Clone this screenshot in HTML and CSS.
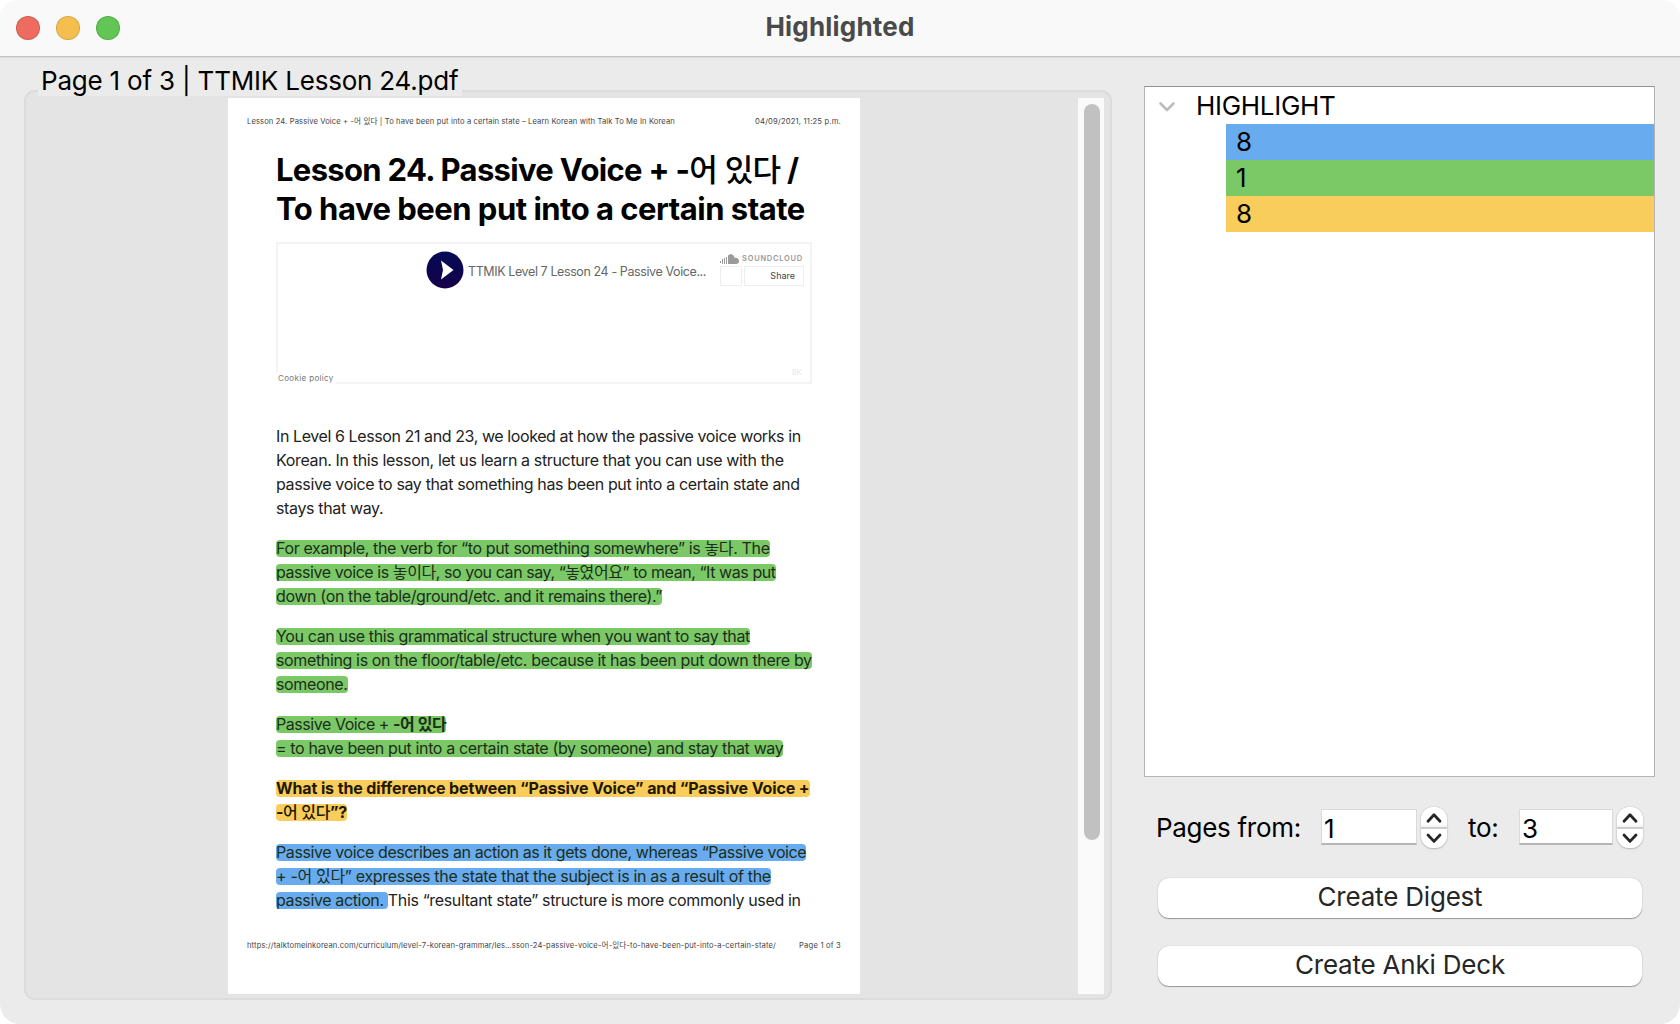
FILE: index.html
```html
<!DOCTYPE html>
<html lang="en">
<head>
<meta charset="utf-8">
<title>Highlighted</title>
<link rel="stylesheet" href="styles.css">
</head>
<body>
<div class="window">
  <header class="titlebar">
    <div class="lights"><i class="light close"></i><i class="light minimize"></i><i class="light zoom"></i></div>
    <h1 class="window-title">Highlighted</h1>
  </header>
  <main class="content">
    <section class="viewer">
      <div class="viewer-label">Page 1 of 3 | TTMIK Lesson 24.pdf</div>
      <div class="group">
        <article class="page">
          <div class="running head"><span class="run-title">Lesson 24. Passive Voice + -어 있다 | To have been put into a certain state – Learn Korean with Talk To Me In Korean</span><span class="run-date">04/09/2021, 11:25 p.m.</span></div>
          <h2 class="heading"><span class="h-line one">Lesson 24. Passive Voice + -<span class="ko">어 있다</span> /</span><span class="h-line two">To have been put into a certain state</span></h2>
          <div class="embed">
            <div class="player">
              <svg class="play" viewBox="0 0 38 38"><defs><linearGradient id="g" x1="0" y1="0" x2="0" y2="1"><stop offset="0" stop-color="#030c55"/><stop offset="1" stop-color="#160048"/></linearGradient></defs><circle cx="19" cy="19" r="18.5" fill="url(#g)"/><path d="M15 9.500 27.500 19 15 28.500 17 19Z" fill="#fff"/></svg>
              <span class="track">TTMIK Level 7 Lesson 24 - Passive Voice...</span>
              <div class="cloud">
                <div class="brand"><svg viewBox="0 0 19 10" class="cloud-icon"><path d="M0 9V7h1v2zM2 10V5h1v5zM4 10V4h1v6zM6 10V3h1v7zM8 10V1.500C11-.8 14 .5 14.500 4 17 3 19 4.800 19 7s-1 3-3 3z" fill="#9b9b9b"/></svg><span>SOUNDCLOUD</span></div>
                <div class="share-row"><span class="like"></span><span class="share">Share</span></div>
              </div>
            </div>
            <div class="embed-foot"><span class="cookie">Cookie policy</span><span class="plays">8K</span></div>
          </div>
          <div class="body">
            <p><span class="l a1">In Level 6 Lesson 21 and 23, we looked at how the passive voice works in</span><span class="l">Korean. In this lesson, let us learn a structure that you can use with the</span><span class="l">passive voice to say that something has been put into a certain state and</span><span class="l">stays that way.</span></p>
            <p><span class="l"><mark class="green">For example, the verb for “to put something somewhere” is 놓다. The</mark></span><span class="l"><mark class="green b2">passive voice is 놓이다, so you can say, “놓였어요” to mean, “It was put</mark></span><span class="l"><mark class="green">down (on the table/ground/etc. and it remains there).”</mark></span></p>
            <p><span class="l"><mark class="green">You can use this grammatical structure when you want to say that</mark></span><span class="l"><mark class="green">something is on the floor/table/etc. because it has been put down there by</mark></span><span class="l"><mark class="green">someone.</mark></span></p>
            <p><span class="l"><mark class="green d1">Passive Voice + <b>-어 있다</b></mark></span><span class="l"><mark class="green">= to have been put into a certain state (by someone) and stay that way</mark></span></p>
            <p class="strong"><span class="l"><mark class="yellow">What is the difference between “Passive Voice” and “Passive Voice +</mark></span><span class="l"><mark class="yellow e2">-<span class="ko">어 있다</span>”?</mark></span></p>
            <p><span class="l"><mark class="blue f1">Passive voice describes an action as it gets done, whereas “Passive voice</mark></span><span class="l"><mark class="blue f2">+ -어 있다” expresses the state that the subject is in as a result of the</mark></span><span class="l"><mark class="blue">passive action. </mark>This “resultant state” structure is more commonly used in</span></p>
          </div>
          <div class="running foot"><span class="run-url">https://talktomeinkorean.com/curriculum/level-7-korean-grammar/les…sson-24-passive-voice-어-있다-to-have-been-put-into-a-certain-state/</span><span class="run-page">Page 1 of 3</span></div>
        </article>
        <div class="scrollbar"><div class="thumb"></div></div>
      </div>
    </section>
    <aside class="side">
      <div class="tree">
        <div class="tree-head"><svg class="chev" viewBox="0 0 18 12"><path d="M2.500 2.500 9 9 15.500 2.500" fill="none" stroke="#bdbdbd" stroke-width="2.600" stroke-linecap="round" stroke-linejoin="round"/></svg><span>HIGHLIGHT</span></div>
        <div class="item blue">8</div>
        <div class="item green">1</div>
        <div class="item yellow">8</div>
      </div>
      <div class="range">
        <span class="from">Pages from:</span>
        <span class="field first">1</span>
        <span class="stepper"><svg viewBox="0 0 26 42"><path d="M7 14.200 13 7.800 19 14.200M7 28 13 34.400 19 28" fill="none" stroke="#262626" stroke-width="2.800" stroke-linecap="round" stroke-linejoin="round"/></svg></span>
        <span class="to">to:</span>
        <span class="field second">3</span>
        <span class="stepper"><svg viewBox="0 0 26 42"><path d="M7 14.200 13 7.800 19 14.200M7 28 13 34.400 19 28" fill="none" stroke="#262626" stroke-width="2.800" stroke-linecap="round" stroke-linejoin="round"/></svg></span>
      </div>
      <button class="action">Create Digest</button>
      <button class="action">Create Anki Deck</button>
    </aside>
  </main>
</div>
</body>
</html>
```
FILE: styles.css
```css
* { box-sizing: border-box; }
body { margin: 0; background: #fff; font-family: Inter, "Noto Sans CJK KR", sans-serif; color: #000; }
.window { width: 1680px; height: 1024px; border-radius: 20px; overflow: hidden; background: #ebebeb; display: flex; flex-direction: column; }

.titlebar { height: 58px; flex: none; background: #f9f9f9; border-bottom: 1px solid #dedede; box-shadow: inset 0 -1px #c3c3c3; display: grid; grid-template-columns: 1fr auto 1fr; align-items: center; padding: 0 16px; }
.lights { display: flex; gap: 16px; padding-bottom: 1px; }
.light { width: 24px; height: 24px; border-radius: 50%; border: 1px solid #0002; }
.close { background: #ed6b5f; }
.minimize { background: #f5bf4f; }
.zoom { background: #61c654; }
.window-title { margin: 0; font-size: 26px; line-height: 32px; font-weight: 700; letter-spacing: 0.2px; color: #4a4a4a; padding-bottom: 4px; }

.content { flex: 1; display: flex; }
.viewer { width: 1088px; margin-left: 24px; padding-top: 6px; display: flex; flex-direction: column; align-items: flex-start; }
.viewer-label { position: relative; z-index: 1; height: 32px; margin: 0 0 -6px 14px; padding: 0 4px 0 3px; background: #ebebeb; font-size: 26px; line-height: 34px; white-space: nowrap; width: 424px; letter-spacing: -0.2px; }
.group { width: 1088px; height: 910px; border: 2px solid #dcdcdc; border-radius: 11px; background: #e4e4e4; padding: 6px; display: flex; justify-content: space-between; padding-left: 202px; }
.scrollbar { width: 26px; height: 896px; background: #fafafa; padding: 6px; }
.thumb { height: 736px; border-radius: 8px; width: 16px; background: #c1c1c1; }

.page { width: 632px; height: 896px; background: #fff; display: flex; flex-direction: column; white-space: nowrap; }
.running { display: flex; justify-content: space-between; padding: 0 19px; font-size: 7.6px; line-height: 12px; color: #444; }
.head { margin-top: 18px; }
.run-title { letter-spacing: 0.115px; }
.run-date, .run-page { letter-spacing: 0.2px; }
.run-url { letter-spacing: 0.13px; }
.heading { margin: 22px 0 0 48px; font-size: 31px; line-height: 39px; font-weight: 700; letter-spacing: -0.5px; }
.h-line { display: block; }
.one { letter-spacing: -0.68px; }
.ko { font-weight: 500; }
.embed { width: 536px; height: 142px; flex: none; margin: 14px 0 0 48px; border: 2px solid #f3f3f3; display: flex; flex-direction: column; justify-content: space-between; }
.player { display: flex; padding: 7px 7px 0 148px; }
.play { width: 38px; height: 38px; flex: none; margin-right: 4px; }
.track { font-size: 12.5px; line-height: 16px; margin-top: 13px; color: #666; width: 252px; flex: none; letter-spacing: -0.4px; }
.cloud { padding-top: 3px; }
.brand { display: flex; gap: 3px; align-items: center; height: 10px; font-size: 7.5px; line-height: 10px; color: #999; font-weight: 600; letter-spacing: 0.75px; }
.cloud-icon { width: 19px; height: 10px; flex: none; }
.share-row { display: flex; gap: 2px; margin-top: 2px; }
.like { width: 22px; height: 20px; border: 1px solid #eee; }
.share { width: 60px; height: 20px; border: 1px solid #eee; font-size: 9px; line-height: 18px; text-align: right; padding-right: 8px; color: #444; }
.embed-foot { display: flex; justify-content: space-between; align-items: flex-end; padding-right: 8px; font-size: 8px; }
.cookie { background: #fff; line-height: 12px; width: 60px; margin: 0 0 -2px -2px; padding: 0 0 0 2px; color: #777; letter-spacing: .35px; }
.plays { color: #e8e8e8; line-height: 20px; }

.body { margin: 40px 0 0 48px; font-size: 16px; line-height: 24px; letter-spacing: -0.36px; color: #222; }
.body p { margin: 0 0 16px; }
.l { display: block; height: 24px; }
.a1 { letter-spacing: -0.41px; }
.b2 { letter-spacing: -0.43px; }
.d1 { letter-spacing: -0.45px; }
.f1 { letter-spacing: -0.4px; }
.f2 { letter-spacing: -0.32px; }
mark { display: inline-block; height: 17px; line-height: 17px; border-radius: 4px; color: #1b2e1b; white-space: pre; }
.strong { font-weight: 700; letter-spacing: -0.12px; }
.strong mark { color: #1f1800; }
.e2 { letter-spacing: -0.38px; }
.green { background: #7bc867; }
.yellow { background: #f9cd5b; }
.blue { background: #68abee; }
.foot { margin-top: 12px; }

.side { margin: 28px 0 0 32px; width: 511px; }
.tree { height: 691px; background: #fff; border: 1px solid #b5b5b5; border-top-color: #919191; padding-top: 1px; font-size: 26px; line-height: 36px; display: flex; flex-direction: column; }
.tree-head { height: 36px; padding-left: 13px; display: flex; align-items: center; gap: 20px; letter-spacing: -0.3px; }
.chev { width: 18px; height: 12px; margin-top: 2px; }
.item { height: 36px; margin-left: 81px; padding-left: 10px; }
.range { display: flex; align-items: center; height: 44px; margin: 28px 0 29px; padding-left: 12px; font-size: 26px; line-height: 36px; white-space: nowrap; }
.from { width: 165px; letter-spacing: -0.3px; padding-top: 2px; }
.field { height: 36px; background: #fff; border: 1px solid #dadada; border-bottom: 2px solid #b5b5b5; padding-left: 2px; line-height: 38px; }
.first { width: 96px; }
.second { width: 94px; }
.stepper { width: 26px; height: 41px; margin-left: 4px; border-radius: 12px; background: linear-gradient(#fff 0 17px, #f0f0f0 20px, #cfcfcf 20px 22px, #fff 22px); box-shadow: 0 0 1px #0005, 0 1px 2px #0003; }
.stepper svg { display: block; width: 26px; height: 42px; }
.to { width: 72px; padding: 2px 0 0 21px; letter-spacing: -0.3px; }
.action { display: block; width: 484px; height: 40px; margin: 0 0 28px 14px; padding: 0 0 2px; border: 0; border-radius: 11px; background: #fff; box-shadow: 0 0 1px #0005, 0 1px 1px #0005; font: 26px/38px Inter, sans-serif; letter-spacing: -0.2px; color: #262626; }
```
